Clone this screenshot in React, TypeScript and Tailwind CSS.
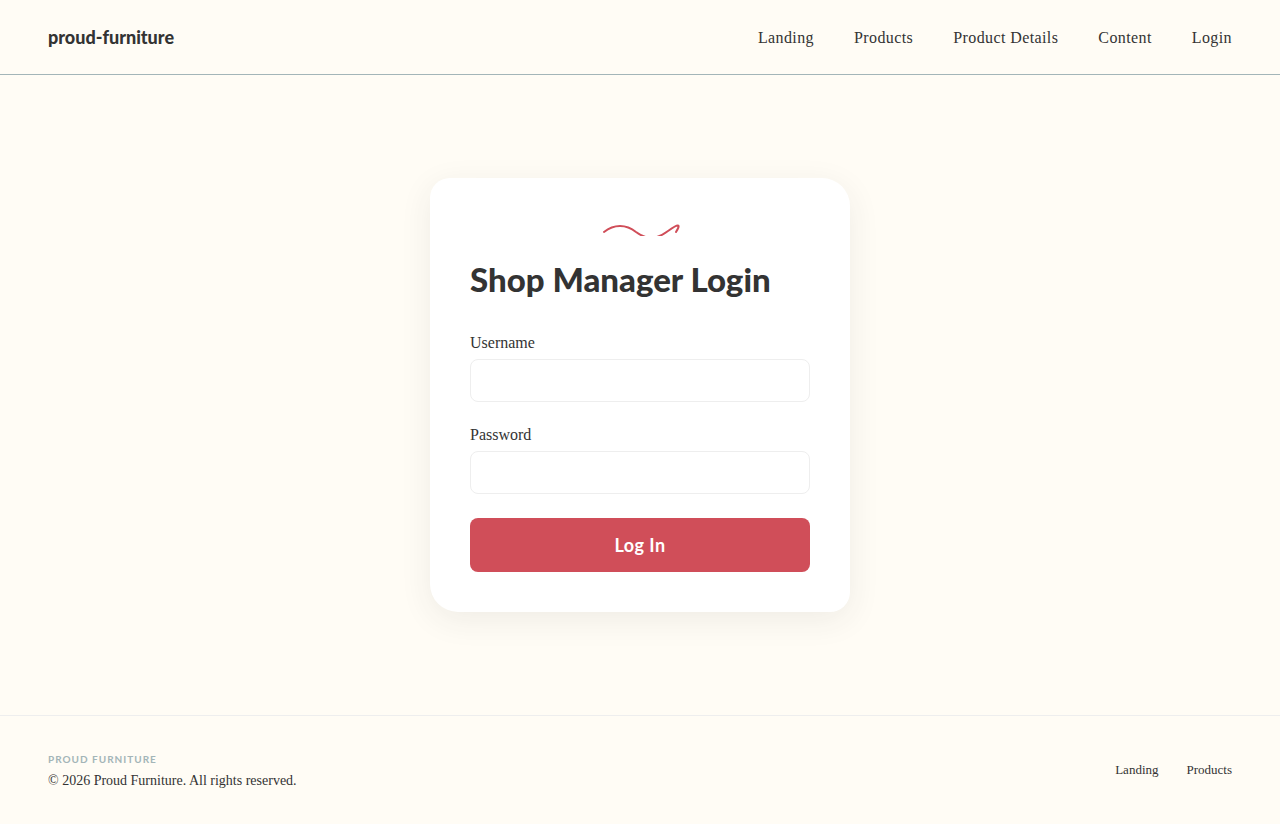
import React from 'react';

const navLinks = ['Landing', 'Products', 'Product Details', 'Content', 'Login'];
const footerLinks = ['Landing', 'Products'];

export default function App() {
    return (
        <div className="flex min-h-screen flex-col bg-[#fffcf5] font-['Liberation_Serif',serif] text-[#333333]">
            <Header />
            <main className="flex flex-1 items-center justify-center px-6 py-12">
                <LoginCard />
            </main>
            <Footer />
        </div>
    );
}

function Header() {
    return (
        <header className="flex items-center justify-between border-b border-[#a3b5b8] px-12 py-6">
            <a href="#" className="font-['Lato',sans-serif] text-lg leading-[26px] font-black">
                proud-furniture
            </a>
            <nav className="flex gap-10 pt-0.5">
                {navLinks.map((label) => (
                    <a key={label} href="#" className="text-base leading-6 tracking-wide">
                        {label}
                    </a>
                ))}
            </nav>
        </header>
    );
}

function LoginCard() {
    return (
        <div className="w-full max-w-[420px] rounded-tl-[20px] rounded-tr-[28px] rounded-br-[20px] rounded-bl-[28px] bg-white p-10 shadow-[0_8px_32px_rgba(51,51,51,0.08)]">
            <Squiggle />
            <h1 className="mb-8 font-['Lato',sans-serif] text-[33px] leading-[46px] font-black">Shop Manager Login</h1>
            <form className="flex flex-col gap-6" onSubmit={(e) => e.preventDefault()}>
                <Field id="username" label="Username" type="text" />
                <Field id="password" label="Password" type="password" />
                <button
                    type="submit"
                    className="w-full rounded-lg bg-[#d04e59] py-3.5 font-['Lato',sans-serif] text-lg leading-[26px] font-bold tracking-wide text-white"
                >
                    Log In
                </button>
            </form>
        </div>
    );
}

function Field({ id, label, type }: { id: string, label: string, type: string }) {
    return (
        <div>
            <label htmlFor={id} className="mb-[7px] block text-base leading-[18px]">{label}</label>
            <input
                id={id}
                name={id}
                type={type}
                className="block h-[43px] w-full rounded-lg border border-[#eeeeee] bg-white px-3 text-base outline-none focus:border-[#a3b5b8]"
            />
        </div>
    );
}

function Squiggle() {
    return (
        <svg className="mx-auto mb-5 block overflow-hidden" width="80" height="18" viewBox="0 0 80 18" fill="none" aria-hidden="true">
            <path
                d="M4 14 C14 6 26 6 36 14 C47 22 56 22 68 13 C79 5 81 6 76 14"
                stroke="#d04e59"
                strokeWidth="2"
                strokeLinecap="round"
            />
        </svg>
    );
}

function Footer() {
    return (
        <footer className="flex items-center justify-between border-t border-[#eeeeee] px-12 py-8">
            <div>
                <div className="font-['Lato',sans-serif] text-[10px] leading-[22px] font-bold tracking-widest text-[#a3b5b8]">
                    PROUD FURNITURE
                </div>
                <p className="text-sm leading-[22px]">© 2026 Proud Furniture. All rights reserved.</p>
            </div>
            <nav className="flex gap-7">
                {footerLinks.map((label) => (
                    <a key={label} href="#" className="text-[13px] leading-6">{label}</a>
                ))}
            </nav>
        </footer>
    );
}
